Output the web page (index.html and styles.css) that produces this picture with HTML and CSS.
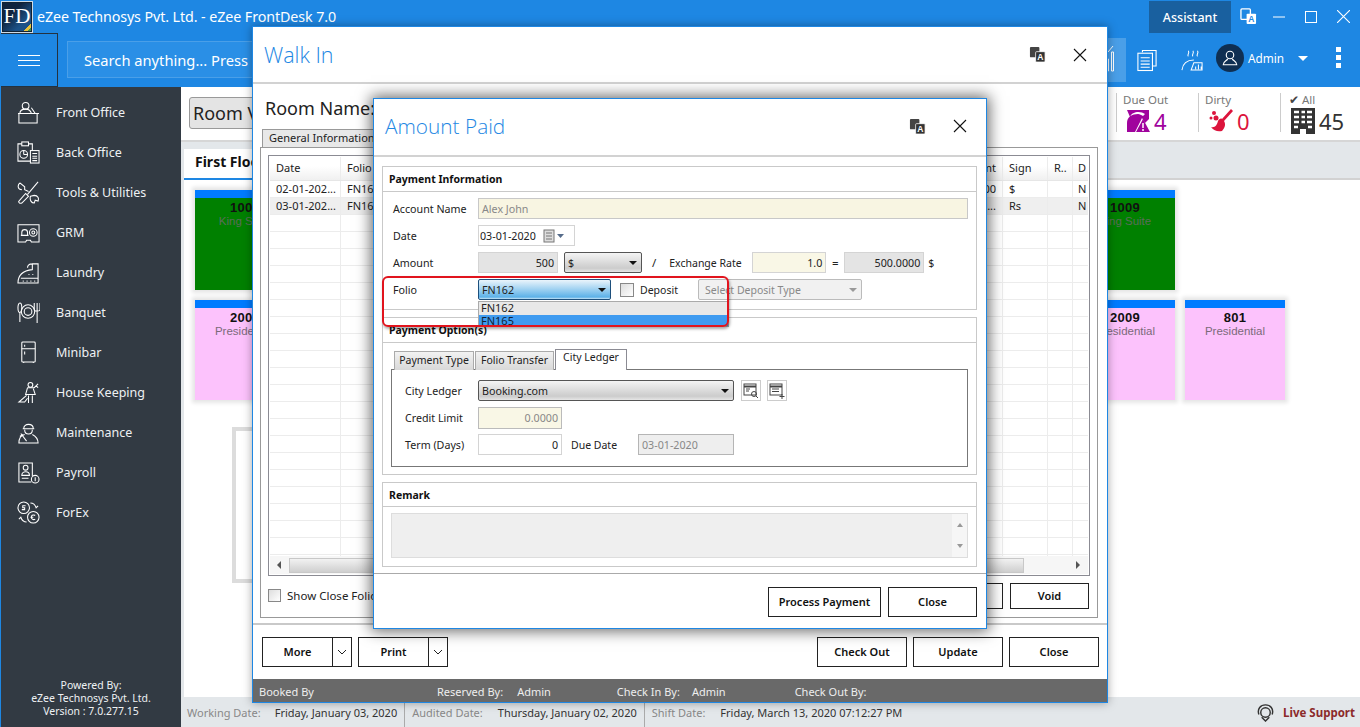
FILE: index.html
```html
<!DOCTYPE html>
<html lang="en">
<head>
<meta charset="utf-8">
<title>eZee FrontDesk 7.0</title>
<link rel="stylesheet" href="styles.css">
</head>
<body>
<div class="app">
  <header class="titlebar">
    <div class="logo"><span>FD</span></div>
    <div class="apptitle">eZee Technosys Pvt. Ltd. - eZee FrontDesk 7.0</div>
    <div class="assistant">Assistant</div>
    <svg class="tb-translate" viewBox="0 0 18 18"><rect x="1" y="1" width="10" height="11" rx="1" fill="none" stroke="#fff" stroke-width="1.4"/><rect x="7" y="6" width="10" height="11" rx="1" fill="#fff"/><text x="12" y="15" class="svg-a blue">A</text></svg>
    <svg class="wc wc-min" viewBox="0 0 12 12"><path d="M0 6H12" stroke="#fff"/></svg>
    <svg class="wc wc-max" viewBox="0 0 12 12"><rect x=".5" y=".5" width="11" height="11" fill="none" stroke="#fff"/></svg>
    <svg class="wc wc-x" viewBox="0 0 12 12"><path d="M0 0L12 12M12 0L0 12" stroke="#fff"/></svg>
  </header>
  <div class="toolbar">
    <button class="burger"><i></i><i></i><i></i></button>
    <div class="search">Search anything... Press</div>
    <div class="tool-active"><svg viewBox="0 0 27 44" fill="none" stroke="#fff"><path d="M7.500 33V21H9.500V33ZM12.500 33V14H14.500V33ZM9 14L14 8"/></svg></div>
    <svg class="tool-doc" viewBox="0 0 22 24" fill="none" stroke="#fff" stroke-width="1.2"><path d="M6 3V1H21V18H17"/><rect x="1" y="4" width="16" height="19"/><path d="M4 9H14M4 12.500H14M4 16H14M4 19.500H14"/></svg>
    <svg class="tool-hk" viewBox="0 0 24 24" fill="none" stroke="#fff" stroke-width="1.1"><path d="M8 8C6 6 10 5 8 2M13 8C11 6 15 5 13 2M18 8C16 6 20 5 18 2M1 23C2 15 7 12 14 12M11 23L14 15H23V23ZM16 22V19M19 22V17M22 22V19"/></svg>
    <div class="avatar"><svg viewBox="0 0 24 24" fill="none" stroke="#fff" stroke-width="1.5"><circle cx="12" cy="8" r="5"/><path d="M9 13C8 16 3 16 3 21H21C21 16 16 16 15 13"/></svg></div>
    <div class="adminname">Admin</div>
    <div class="caret"></div>
    <div class="kebab"><i></i><i></i><i></i></div>
  </div>
  <div class="main">
    <aside class="sidebar">
      <nav class="menu">
        <a class="menu-item"><svg viewBox="0 0 24 24"><circle cx="9" cy="5" r="3.500"/><path d="M3 13C3 9 6 8.500 9 8.500S14 9 15 13M15 7L19 13M1 13H23M2 13V23H21V13"/></svg>Front Office</a>
        <a class="menu-item"><svg viewBox="0 0 24 24"><path d="M14 21H1V3H5M12 3H16V10"/><rect x="5" y="1" width="7" height="4"/><circle cx="7" cy="14" r="4"/><path d="M7 14V10M7 14H11"/><rect x="14" y="10" width="9" height="13"/><path d="M16 13H21M16 16H21M16 18H21M16 20.500H21"/></svg>Back Office</a>
        <a class="menu-item"><svg viewBox="0 0 24 24"><path d="M22 1L11 14M2 21L9 13L12 16L5 23C3 24 1 22 2 21ZM3 2L8 6V9L12 11M3 2C0 5 1 9 5 9M14 16L18 15C22 15 23 18 22 21L19 20L18 23C15 23 13 20 14 16Z"/></svg>Tools &amp; Utilities</a>
        <a class="menu-item"><svg viewBox="0 0 24 24"><path d="M1 4H23V22H15L14 20H10L9 22H1ZM5 15V12C5 8 11 8 11 12V15ZM4 15H12"/><circle cx="17" cy="12" r="4"/><circle cx="17" cy="12" r="1.500"/></svg>GRM</a>
        <a class="menu-item"><svg viewBox="0 0 24 24"><path d="M1 23C1 15 6 10 16 9V3H22V23ZM16 3C12 3 11 5 11 7M4 18H22M6 21H7M10 21H11M14 21H15M18 21H19M12 14H13M16 14H17"/></svg>Laundry</a>
        <a class="menu-item"><svg viewBox="0 0 24 24"><ellipse cx="3" cy="7" rx="2" ry="5"/><path d="M3 12V22M21 2V23M18 2V9C18 11 24 11 24 9V2"/><circle cx="11.500" cy="11" r="7"/><circle cx="11.500" cy="11" r="4"/></svg>Banquet</a>
        <a class="menu-item"><svg viewBox="0 0 24 24"><rect x="5" y="1" width="14" height="21" rx="1"/><path d="M5 8H19M8 4V6M8 11V14M7 22V23M17 22V23"/></svg>Minibar</a>
        <a class="menu-item"><svg viewBox="0 0 24 24"><circle cx="14" cy="4" r="2.500"/><path d="M11 7L18 7L22 3M11 7L9 14H19L17 8M10 15L2 22H8L11 18M12 15V23M16 15V23M20 5L22 7"/></svg>House Keeping</a>
        <a class="menu-item"><svg viewBox="0 0 24 24"><path d="M7 8C7 2 17 2 17 8ZM6 8H18M8 9C8 15 16 15 16 9M8 14C3 15 2 19 2 23H22C22 19 20 16 16 14M4 13L10 21M3 16L6 14"/></svg>Maintenance</a>
        <a class="menu-item"><svg viewBox="0 0 24 24"><path d="M16 16V2H2V22H15"/><circle cx="9" cy="7" r="2.500"/><path d="M5 15C5 10 13 10 13 15ZM5 18H12"/><circle cx="19" cy="19" r="4"/><path d="M19 17V21"/></svg>Payroll</a>
        <a class="menu-item"><svg viewBox="0 0 24 24"><circle cx="7" cy="7" r="6"/><circle cx="17" cy="17" r="6"/><path d="M14 2C17 2 19 4 20 7L22 5M10 22C7 22 5 20 4 17L2 19M9 5H6V7H8V9H5M19 15C16 14 15 15 15 17S17 20 19 19M14 17H17"/></svg>ForEx</a>
      </nav>
      <div class="powered">Powered By:<br>eZee Technosys Pvt. Ltd.<br>Version : 7.0.277.15</div>
    </aside>
    <section class="content">
      <div class="topstrip">
        <button class="roomview">Room View</button>
        <div class="stats">
          <div class="stat"><div class="stat-label">Due Out</div><div class="stat-val due"><svg viewBox="0 0 24 24"><path d="M1 1H23V10L19 14L16 9L9 23H1V14C1 8 6 5 12 5C14 5 15 6 17 7L19 5C15 2 6 2 4 8Z" fill="#a0039d"/><path d="M17 10L24 23H10Z" fill="#a0039d"/><path d="M17 14V19M17 20V22" stroke="#fff" stroke-width="1.500"/></svg>4</div></div>
          <div class="stat"><div class="stat-label">Dirty</div><div class="stat-val dirty"><svg viewBox="0 0 24 24" fill="#dc143c"><circle cx="5" cy="4" r="2"/><circle cx="2" cy="9" r="1.500"/><circle cx="7" cy="9" r="2.500"/><path d="M22 0L24 2L15 12C17 15 16 19 13 22C9 23 5 22 2 18C6 19 8 16 9 12C10 10 12 9 13 10Z"/></svg>0</div></div>
          <div class="stat stat-all"><div class="stat-label"><span class="check">✔</span> All</div><div class="stat-val all"><svg viewBox="0 0 24 26"><path d="M0 0H24V26H15V21H9V26H0Z" fill="#333"/><path d="M3 4H8M10.500 4H14M16 4H21M3 9H8M10.500 9H14M16 9H21M3 14H8M10.500 14H14M16 14H21M3 19H7M17 19H21" stroke="#fff" stroke-width="2.500"/></svg>45</div></div>
        </div>
      </div>
      <div class="floorpane">
        <div class="floortabs"><div class="floortab">First Floor</div></div>
        <div class="floorbody">
          <div class="rooms">
            <div class="room green"><b>1001</b><span>King Suite</span></div><div class="room green"></div><div class="room green"></div><div class="room green"></div><div class="room green"></div><div class="room green"></div><div class="room green"></div><div class="room green"></div><div class="room green"><b>1009</b><span>King Suite</span></div><div class="room-gap"></div>
            <div class="room pink"><b>2001</b><span>Presidential</span></div><div class="room pink"></div><div class="room pink"></div><div class="room pink"></div><div class="room pink"></div><div class="room pink"></div><div class="room pink"></div><div class="room pink"></div><div class="room pink"><b>2009</b><span>Presidential</span></div><div class="room pink"><b>801</b><span>Presidential</span></div>
          </div>
          <div class="legendbox"></div>
        </div>
      </div>
      <footer class="statusbar">
        <span class="st-l st-a">Working Date:</span><span class="st-v">Friday, January 03, 2020</span><i class="st-div"></i>
        <span class="st-l st-b">Audited Date:</span><span class="st-v">Thursday, January 02, 2020</span><i class="st-div"></i>
        <span class="st-l st-c">Shift Date:</span><span class="st-v">Friday, March 13, 2020 07:12:27 PM</span>
        <div class="livesupport"><svg viewBox="0 0 20 20" fill="none" stroke="#333" stroke-width="1.500"><path d="M3 12C1 6 5 2 10 2S19 6 17 12"/><circle cx="10" cy="10" r="5"/><path d="M6 15L10 19L14 15"/></svg>Live Support</div>
      </footer>
    </section>
  </div>

  <div class="window walkin">
    <div class="win-head walk-head">
      <h1 class="win-title">Walk In</h1>
      <svg class="tr-icon" viewBox="0 0 18 18"><rect x="1" y="1" width="10" height="11" rx="1" fill="#444"/><rect x="7" y="6" width="10" height="11" rx="1" fill="#333" stroke="#fff" stroke-width=".8"/><text x="12" y="15" class="svg-a">A</text></svg>
      <svg class="x-icon" viewBox="0 0 14 14"><path d="M1 1L13 13M13 1L1 13" stroke="#111" stroke-width="1.100"/></svg>
    </div>
    <div class="walk-body">
      <div class="roomname">Room Name:</div>
      <div class="gen-tab">General Information</div>
      <div class="gen-panel">
        <div class="grid">
          <div class="grid-head"><span class="c-date">Date</span><span class="c-folio">Folio</span><span class="c-fill"></span><span class="c-amt">Amt</span><span class="c-sign">Sign</span><span class="c-r">R..</span><span class="c-d">D</span></div>
          <div class="grid-row"><span class="c-date">02-01-202...</span><span class="c-folio">FN162</span><span class="c-fill"></span><span class="c-amt">500.00</span><span class="c-sign">$</span><span class="c-r"></span><span class="c-d">N</span></div>
          <div class="grid-row alt"><span class="c-date">03-01-202...</span><span class="c-folio">FN165</span><span class="c-fill"></span><span class="c-amt">350...</span><span class="c-sign">Rs</span><span class="c-r"></span><span class="c-d">N</span></div>
          <div class="grid-empty"></div>
          <div class="hscroll"><i class="arrow-l"></i><div class="thumb"></div><i class="arrow-r"></i></div>
        </div>
        <div class="gen-foot">
          <label class="chk-row"><i class="chk"></i>Show Close Folio</label>
          <button class="btn b-hidden"></button>
          <button class="btn b-void">Void</button>
        </div>
      </div>
    </div>
    <div class="walk-actions">
      <div class="split"><button class="btn split-main">More</button><button class="btn split-arrow"><svg viewBox="0 0 10 6"><path d="M1 1L5 5L9 1" fill="none" stroke="#222"/></svg></button></div>
      <div class="split"><button class="btn split-main">Print</button><button class="btn split-arrow"><svg viewBox="0 0 10 6"><path d="M1 1L5 5L9 1" fill="none" stroke="#222"/></svg></button></div>
      <div class="spacer"></div>
      <button class="btn b-act">Check Out</button>
      <button class="btn b-act">Update</button>
      <button class="btn b-act">Close</button>
    </div>
    <div class="walk-status">
      <span class="ws-a">Booked By</span><span class="ws-b">Reserved By:</span><span class="ws-c">Admin</span><span class="ws-d">Check In By:</span><span class="ws-e">Admin</span><span class="ws-f">Check Out By:</span>
    </div>
  </div>

  <div class="window paid">
    <div class="win-head paid-head">
      <h2 class="win-title">Amount Paid</h2>
      <svg class="tr-icon" viewBox="0 0 18 18"><rect x="1" y="1" width="10" height="11" rx="1" fill="#444"/><rect x="7" y="6" width="10" height="11" rx="1" fill="#333" stroke="#fff" stroke-width=".8"/><text x="12" y="15" class="svg-a">A</text></svg>
      <svg class="x-icon" viewBox="0 0 14 14"><path d="M1 1L13 13M13 1L1 13" stroke="#111" stroke-width="1.100"/></svg>
    </div>
    <div class="paid-body">
      <section class="group g-info">
        <div class="group-title">Payment Information</div>
        <div class="form">
          <div class="row r-acc"><label>Account Name</label><div class="field cream wide muted">Alex John</div></div>
          <div class="row r-date"><label>Date</label><div class="field datefield">03-01-2020<svg viewBox="0 0 22 14"><rect x="1" y="1" width="10" height="12" fill="#ddd" stroke="#777"/><path d="M3 4H9M3 7H9M3 10H9" stroke="#777"/><path d="M14 5H21L17.500 9Z" fill="#556b8a"/></svg></div></div>
          <div class="row r-amt"><label>Amount</label><div class="field gray right f-amt">500</div><div class="combo f-cur">$<i></i></div><span class="slash">/</span><span class="xr">Exchange Rate</span><div class="field cream2 right f-rate">1.0</div><span class="eq">=</span><div class="field gray right f-res">500.0000</div><span class="cur">$</span></div>
          <div class="row r-folio"><label>Folio</label><div class="combo focus f-folio">FN162<i></i></div><i class="chk chk-dep"></i><span class="dep">Deposit</span><div class="disabled-select">Select Deposit Type<i></i></div></div>
        </div>
      </section>
      <section class="group g-opt">
        <div class="group-title">Payment Option(s)</div>
        <div class="tabs"><div class="tab t1">Payment Type</div><div class="tab t2">Folio Transfer</div><div class="tab active">City Ledger</div></div>
        <div class="tabpanel">
          <div class="row r-cl"><label>City Ledger</label><div class="combo f-cl">Booking.com<i></i></div>
            <button class="iconbtn"><svg viewBox="0 0 16 16" fill="none" stroke="#444"><rect x="1" y="1" width="12" height="11"/><path d="M1 3.500H13" stroke-width="2"/><path d="M3 6H7M3 8H6"/><circle cx="11" cy="11" r="2.500"/><path d="M13 13L15 15"/></svg></button>
            <button class="iconbtn"><svg viewBox="0 0 16 16" fill="none" stroke="#444"><rect x="1" y="1" width="12" height="11"/><path d="M1 3.500H13" stroke-width="2"/><path d="M3 6H10M3 8.500H10M13 11V16M10.500 13.500H15.500"/></svg></button>
          </div>
          <div class="row r-cr"><label>Credit Limit</label><div class="field cream2 right f-cr muted">0.0000</div></div>
          <div class="row r-term"><label>Term (Days)</label><div class="field right f-term">0</div><span class="due-l">Due Date</span><div class="field gray2 f-due muted">03-01-2020</div></div>
        </div>
      </section>
      <section class="group g-rem">
        <div class="group-title">Remark</div>
        <div class="remark"><div class="rem-scroll"><i class="up"></i><i class="down"></i></div></div>
      </section>
    </div>
    <div class="paid-actions">
      <button class="btn b-proc">Process Payment</button>
      <button class="btn b-close">Close</button>
    </div>
  </div>

  <div class="folio-list"><div class="opt">FN162</div><div class="opt sel">FN165</div></div>
  <div class="redmark"></div>
</div>
</body>
</html>
```

FILE: styles.css
```css
* { box-sizing: border-box; }
html, body { margin: 0; padding: 0; height: 100%; overflow: hidden; }
body { font-family: "Noto Sans", "Open Sans", sans-serif; font-size: 11.5px; color: #222; background: #fff; }
button { font-family: inherit; }
.app { position: relative; width: 1360px; height: 727px; overflow: hidden; background: #1e87e3; display: flex; flex-direction: column; }

/* title bar */
.titlebar { height: 33px; display: flex; align-items: center; color: #fff; flex: none; }
.logo { width: 32px; height: 32px; margin-left: 1px; border: 1px solid #cfdbe6; outline: 1px solid #123; outline-offset: -2px; background: linear-gradient(135deg, #10243f 0 35%, #1c5288 70%, #1c5288 84%, #e8c23a 85% 90%, #3e8f5a 91%); display: flex; align-items: center; justify-content: center; font: 400 21px "Liberation Serif", serif; color: #fff; }
.apptitle { margin-left: 4px; font-size: 14.300px; letter-spacing: -.1px; flex: 1; }
.assistant { width: 82px; height: 32px; margin-top: 1px; background: #19609f; display: flex; align-items: center; justify-content: center; font-size: 12.500px; font-weight: 500; }
.tb-translate { width: 17px; height: 17px; margin-left: 9px; }
.wc { width: 12px; height: 12px; flex: none; }
.wc-min { margin-left: 16px; }
.wc-max { margin-left: 20px; }
.wc-x { margin: 0 10px 0 20px; width: 13px; height: 13px; }

/* toolbar */
.toolbar { height: 54px; flex: none; display: flex; align-items: center; position: relative; color: #fff; }
.burger { width: 57px; height: 54px; margin-left: 1px; background: #1e87e3; border: 1px solid #24323f; border-left: 0; display: flex; flex-direction: column; align-items: center; justify-content: center; gap: 4px; padding: 0; flex: none; }
.burger i { width: 22px; height: 1px; background: #fff; display: block; }
.search { width: 410px; height: 37px; margin: -1px 0 0 9px; background: #2a8fe6; border: 1px solid #4a9fe8; padding-left: 16px; display: flex; align-items: center; font-size: 14.700px; white-space: nowrap; }
.tool-active { width: 27px; height: 44px; margin-left: 622px; margin-top: -1px; background: #4a9fe8; flex: none; }
.tool-active svg { width: 27px; height: 44px; display: block; }
.tool-doc { width: 20px; height: 23px; margin-left: 11px; flex: none; }
.tool-hk { width: 22px; height: 22px; margin-left: 24px; flex: none; }
.avatar { width: 28px; height: 28px; margin-left: 13px; margin-top: -4px; border-radius: 50%; background: #0f2f52; display: flex; align-items: center; justify-content: center; flex: none; }
.avatar svg { width: 18px; height: 18px; }
.adminname { margin-left: 4px; margin-top: -4px; font-size: 11.800px; width: 37px; flex: none; }
.caret { margin-left: 13px; margin-top: -4px; width: 0; height: 0; border: 5px solid transparent; border-top: 5px solid #fff; border-bottom: 0; flex: none; }
.kebab { margin-left: 28px; margin-top: -6px; display: flex; flex-direction: column; gap: 3px; }
.kebab i { width: 5px; height: 5px; background: #fff; display: block; }

/* main */
.main { flex: 1; display: flex; min-height: 0; }
.sidebar { width: 181px; flex: none; margin-left: 1px; background: #323a43; color: #eef1f3; display: flex; flex-direction: column; }
.menu { flex: 1; display: flex; flex-direction: column; padding-top: 5px; }
.menu-item { height: 40px; display: flex; align-items: center; font-size: 12.500px; padding-left: 16px; gap: 16px; flex: none; }
.menu-item svg { width: 23px; height: 23px; fill: none; stroke: #fff; stroke-width: 1.1; flex: none; }
.powered { text-align: center; font-size: 10.500px; line-height: 13px; padding-bottom: 9px; color: #eef1f3; margin-left: -1px; }

/* content */
.content { flex: 1; min-width: 0; background: #e3e7ea; display: flex; flex-direction: column; margin-left: -1px; }
.topstrip { height: 55px; flex: none; background: #fff; border-bottom: 2px solid #d6d6d6; display: flex; position: relative; }
.roomview { width: 90px; height: 32px; margin: 10px 0 0 8px; background: #e4e4e4; border: 1px solid #999; border-radius: 3px; font-size: 18px; text-align: left; padding: 0 3px; white-space: nowrap; overflow: hidden; color: #222; }
.stats { margin-left: auto; display: flex; padding-top: 6px; }
.stat { width: 82px; height: 39px; border-left: 1px solid #ccc; padding-left: 6px; }
.stat-all { width: 80px; padding-left: 8px; }
.stat-label { font-size: 11.500px; line-height: 14px; color: #777; white-space: nowrap; }
.check { color: #444; font-size: 12px; }
.stat-val { display: flex; align-items: center; gap: 4px; font-size: 22px; line-height: 26px; margin-top: 1px; padding-left: 3px; }
.stat-val svg { width: 24px; height: 26px; }
.due { color: #a0039d; }
.dirty { color: #dc143c; padding-left: 4px; }
.all { color: #333; padding-left: 2px; }

.floorpane { flex: 1; min-height: 0; margin: 7px 0 0 3px; display: flex; flex-direction: column; background: #fff; }
.floortabs { height: 31px; background: #e3e7ea; flex: none; border-bottom: 2px solid #d2d2d2; display: flex; }
.floortab { width: 90px; height: 31px; background: #fff; border-bottom: 2px solid #1e87e3; font-size: 14px; font-weight: 700; color: #111; padding: 3px 0 0 11px; white-space: nowrap; }
.floorbody { flex: 1; min-height: 0; padding: 10px 0 0 11px; }
.rooms { display: grid; grid-template-columns: repeat(10, 100px); grid-auto-rows: 100px; gap: 10px; }
.room { box-shadow: 0 0 4px 3px #e6e6e6; border-top: 8px solid #007bff; display: flex; flex-direction: column; align-items: center; padding-top: 2px; font-family: "Liberation Sans", sans-serif; }
.room b { font-size: 13px; line-height: 15px; color: #111; letter-spacing: .3px; }
.room span { font-size: 11.500px; line-height: 12px; }
.green { background: #008000; }
.green span { color: #5a6e5a; }
.pink { background: #fcc2fc; }
.pink span { color: #7a6a7a; }
.room-gap { background: transparent; }
.legendbox { width: 220px; height: 156px; margin: 27px 0 0 37px; background: #fff; border: 4px solid #dcdcdc; }

.statusbar { height: 30px; flex: none; background: #e3e7ea; display: flex; align-items: center; margin-left: 3px; font-size: 11px; position: relative; color: #333; white-space: nowrap; }
.st-l { color: #888; }
.st-a { margin-left: 3px; }
.st-v { margin-left: 14px; }
.st-b + .st-v, .st-c + .st-v { margin-left: 15px; }
.st-div { width: 1px; height: 30px; background: #aaa; margin: 0 7px; }
.livesupport { margin-left: auto; margin-right: 5px; display: flex; align-items: center; gap: 8px; font-weight: 700; font-size: 11.500px; color: #8b2a2a; }
.livesupport svg { width: 19px; height: 19px; }

/* windows */
.window { position: absolute; background: #fff; border: 1px solid #1e87e3; display: flex; flex-direction: column; }
.walkin { left: 252px; top: 26px; width: 856px; height: 677px; box-shadow: 0 0 9px rgba(0,0,0,.35); }
.paid { left: 373px; top: 98px; width: 614px; height: 531px; box-shadow: 0 0 14px 2px rgba(0,0,0,.6); }
.win-head { display: flex; align-items: center; flex: none; border-bottom: 2px solid #d2d2d2; }
.win-title { margin: 0; font-weight: 300; font-family: "Open Sans", "Noto Sans", sans-serif; color: #1e87e3; white-space: nowrap; flex: 1; }
.walk-head { height: 57px; padding: 0 20px 0 11px; }
.walk-head .win-title { font-size: 21.500px; }
.paid-head { height: 58px; padding: 0 19px 2px 11px; }
.paid-head .win-title { font-size: 20.800px; }
.tr-icon { width: 17px; height: 17px; }
.x-icon { width: 14px; height: 14px; margin-left: 27px; }
.svg-a { font: 700 9px "Liberation Sans", sans-serif; fill: #fff; text-anchor: middle; }
.svg-a.blue { fill: #1e87e3; }

/* walk in body */
.walk-body { flex: 1; min-height: 0; display: flex; flex-direction: column; padding: 0 9px 0 7px; border-bottom: 2px solid #c9c9c9; }
.roomname { font-size: 18px; line-height: 25px; margin: 12px 0 0 5px; color: #222; }
.gen-tab { width: 114px; height: 18px; margin: 8px 0 0 2px; background: #e8e8e8; border: 1px solid #999; border-bottom: 0; padding-left: 6px; font-size: 11px; line-height: 16px; white-space: nowrap; overflow: hidden; flex: none; }
.gen-panel { flex: 1; min-height: 0; margin-bottom: 5px; border: 1px solid #999; padding: 7px 7px 8px 7px; display: flex; flex-direction: column; }
.grid { flex: 1; min-height: 0; border: 1px solid #8b8b93; display: flex; flex-direction: column; padding: 1px; overflow: hidden; }
.grid-head { height: 24px; display: flex; flex: none; background: linear-gradient(#fff 40%, #f0f0f0); border-bottom: 1px solid #e6e6e6; font-size: 11px; line-height: 21px; }
.grid-row { height: 17px; display: flex; flex: none; font-size: 11px; line-height: 16px; border-bottom: 1px solid #ececec; }
.grid-row.alt { background: #efefef; }
.grid-head span, .grid-row span { border-right: 1px solid #ececec; padding-left: 6px; white-space: nowrap; overflow: hidden; flex: none; }
.c-date { width: 71px; }
.c-folio { width: 60px; }
.grid .c-fill { flex: 1; }
.grid .c-amt { width: 80px; text-align: right; padding-right: 6px; }
.c-sign { width: 45px; }
.c-r { width: 25px; }
.grid span.c-d { width: 15px; border-right: 0; padding-left: 5px; overflow: hidden; }
.grid-empty { flex: 1; background:
  linear-gradient(90deg, transparent 70px, #ececec 70px 71px, transparent 71px) 0 0,
  linear-gradient(270deg, transparent 15px, #ececec 15px 16px, transparent 16px 40px, #ececec 40px 41px, transparent 41px 85px, #ececec 85px 86px, transparent 86px) 0 0,
  repeating-linear-gradient(#fff 0 16px, #ececec 16px 17px); }
.hscroll { height: 18px; flex: none; background: #f6f6f6; display: flex; align-items: center; }
.thumb { height: 15px; width: 735px; margin-left: 8px; background: linear-gradient(#f2f2f2, #cfcfcf); border: 1px solid #c8c8c8; }
.arrow-l { margin-left: 7px; width: 0; height: 0; border: 4px solid transparent; border-right-color: #555; border-left: 0; flex: none; }
.arrow-r { margin-left: 52px; width: 0; height: 0; border: 4px solid transparent; border-left-color: #555; border-right: 0; flex: none; }
.gen-foot { height: 33px; flex: none; display: flex; align-items: flex-end; position: relative; }
.chk-row { display: flex; align-items: center; gap: 6px; align-self: center; margin-top: 6px; font-size: 11.500px; white-space: nowrap; }
.chk { display: inline-block; width: 13px; height: 13px; border: 1px solid #888; background: linear-gradient(135deg, #ddd, #fff); flex: none; }
.btn { background: #fff; border: 1px solid #222; font-size: 11px; font-weight: 600; color: #111; padding: 0 0 2px; white-space: nowrap; }
.b-hidden { width: 79px; height: 26px; margin-left: auto; }
.b-void { width: 79px; height: 26px; margin: 0 1px 0 7px; }
.walk-actions { height: 54px; flex: none; display: flex; align-items: center; gap: 6px; padding: 0 8px 0 9px; }
.split { display: flex; }
.split-main { width: 71px; height: 30px; }
.split-arrow { width: 20px; height: 30px; margin-left: -1px; display: flex; align-items: center; justify-content: center; padding: 0; }
.split-arrow svg { width: 10px; height: 6px; }
.spacer { flex: 1; }
.b-act { width: 90px; height: 30px; }
.walk-status { height: 23px; flex: none; background: #696969; color: #eee; display: flex; align-items: center; font-size: 11px; padding: 1px 0 0 6px; white-space: nowrap; margin-top: auto; }
.ws-b { margin-left: 123px; }
.ws-c { margin-left: 14px; }
.ws-d { margin-left: 66px; }
.ws-e { margin-left: 12px; }
.ws-f { margin-left: 69px; }

/* amount paid */
.paid-body { flex: 1; min-height: 0; display: flex; flex-direction: column; padding: 9px 9px 0 8px; gap: 7px; border-bottom: 1px solid #aaa; }
.group { border: 1px solid #c9c9c9; flex: none; }
.g-info { height: 144px; }
.g-opt { height: 158px; }
.g-rem { height: 85px; }
.group-title { height: 25px; border-bottom: 1px solid #c9c9c9; font-weight: 700; font-size: 10.500px; line-height: 25px; padding-left: 6px; color: #111; white-space: nowrap; }
.g-rem .group-title { height: 24px; }
.form { padding: 6px 0 0 10px; display: flex; flex-direction: column; gap: 6px; }
.row { display: flex; align-items: center; }
.row label { width: 85px; flex: none; font-size: 10.700px; white-space: nowrap; }
.r-acc, .r-amt, .r-folio, .r-date { height: 21px; }
.field { height: 100%; border: 1px solid #d4d4d4; padding: 0 3px; font-size: 10.700px; line-height: 18px; display: flex; align-items: center; flex: none; white-space: nowrap; }
.right { justify-content: flex-end; }
.muted { color: #888; }
.cream { background: #f8f5e2; border-color: #c8c8c8; }
.cream2 { background: #f9f7e6; }
.gray { background: #e4e4e4; }
.gray2 { background: #eee; border-color: #b5b5b5; }
.wide { width: 490px; }
.datefield { width: 97px; padding-left: 1px; gap: 7px; }
.datefield svg { width: 22px; height: 14px; }
.f-amt { width: 80px; }
.combo { height: 100%; border: 1px solid #555; border-radius: 2px; background: linear-gradient(#f4f4f4, #ccc 80%, #e6e6e6); font-size: 10.700px; display: flex; align-items: center; padding-left: 3px; position: relative; flex: none; white-space: nowrap; }
.combo i { position: absolute; right: 4px; top: 50%; margin-top: -2px; width: 0; height: 0; border: 4px solid transparent; border-top: 4px solid #111; border-bottom: 0; }
.f-cur { width: 78px; margin-left: 6px; }
.slash { margin-left: 10px; }
.xr { margin-left: 13px; width: 83px; font-size: 10.500px; white-space: nowrap; }
.f-rate { width: 74px; }
.eq { width: 18px; text-align: center; }
.f-res { width: 80px; }
.cur { margin-left: 4px; font-size: 10.500px; }
.focus { background: linear-gradient(#eaf4fb, #a5d4f2 45%, #5cb1e8 90%, #cbe6f7); border-color: #1d4f7c; }
.f-folio { width: 133px; }
.chk-dep { margin-left: 9px; width: 14px; height: 14px; }
.dep { margin-left: 6px; width: 58px; font-size: 10.500px; }
.disabled-select { width: 164px; height: 100%; border: 1px solid #bbb; border-radius: 2px; background: #f1f1f1; color: #888; font-size: 10.500px; display: flex; align-items: center; padding-left: 6px; position: relative; white-space: nowrap; }
.disabled-select i { position: absolute; right: 4px; top: 50%; margin-top: -2px; width: 0; height: 0; border: 4px solid transparent; border-top: 4px solid #999; border-bottom: 0; }
.tabs { display: flex; height: 27px; align-items: flex-end; padding-left: 11px; margin-bottom: -1px; position: relative; gap: 1px; }
.tab { height: 19px; background: linear-gradient(#f2f2f2, #d8d8d8); border: 1px solid #aaa; border-bottom: 0; font-size: 10.500px; line-height: 17px; text-align: center; white-space: nowrap; }
.t1 { width: 80px; }
.t2 { width: 79px; }
.tab.active { width: 72px; height: 21px; background: #fff; border-color: #8b8b93; position: relative; z-index: 1; line-height: 15px; }
.tabpanel { margin: 0 8px 0 8px; height: 98px; border: 1px solid #777; padding: 10px 0 0 13px; display: flex; flex-direction: column; gap: 6px; }
.tabpanel label { width: 73px; }
.r-cl { height: 21px; }
.r-cr { height: 22px; }
.r-term { height: 21px; margin-top: -1px; }
.f-cl { width: 256px; }
.iconbtn { width: 20px; height: 21px; margin-left: 7px; padding: 1px; border: 1px solid #ccc; background: #fff; display: flex; align-items: center; justify-content: center; }
.iconbtn svg { width: 16px; height: 16px; }
.iconbtn + .iconbtn { margin-left: 6px; }
.f-cr { width: 84px; border-color: #bbb; }
.f-term { width: 84px; }
.due-l { margin-left: 9px; width: 67px; font-size: 10.500px; }
.f-due { width: 96px; }
.remark { margin: 6px 8px 0; height: 45px; background: #efefef; border: 1px solid #ddd; position: relative; display: flex; justify-content: flex-end; }
.rem-scroll { width: 15px; background: #f6f6f6; display: flex; flex-direction: column; justify-content: space-between; align-items: center; padding: 9px 0; }
.up { width: 0; height: 0; border: 3px solid transparent; border-bottom: 4px solid #999; border-top: 0; }
.down { width: 0; height: 0; border: 3px solid transparent; border-top: 4px solid #999; border-bottom: 0; }
.paid-actions { height: 54px; flex: none; display: flex; align-items: flex-start; justify-content: flex-end; gap: 7px; padding: 13px 9px 0 0; }
.b-proc { width: 113px; height: 30px; }
.b-close { width: 89px; height: 30px; }

/* overlays */
.folio-list { position: absolute; left: 478px; top: 301px; width: 251px; height: 26px; background: #e8e8e8; border: 1px solid #aaa; font-size: 11px; z-index: 3; }
.opt { height: 13px; line-height: 11px; padding-left: 2px; }
.opt.sel { background: #3f9bf0; height: 11px; line-height: 12px; color: #123; }
.redmark { position: absolute; left: 382px; top: 276px; width: 347px; height: 51px; border: 2px solid #e1141d; border-radius: 6px; z-index: 4; box-shadow: 1px 2px 3px rgba(0,0,0,.35); }
```
